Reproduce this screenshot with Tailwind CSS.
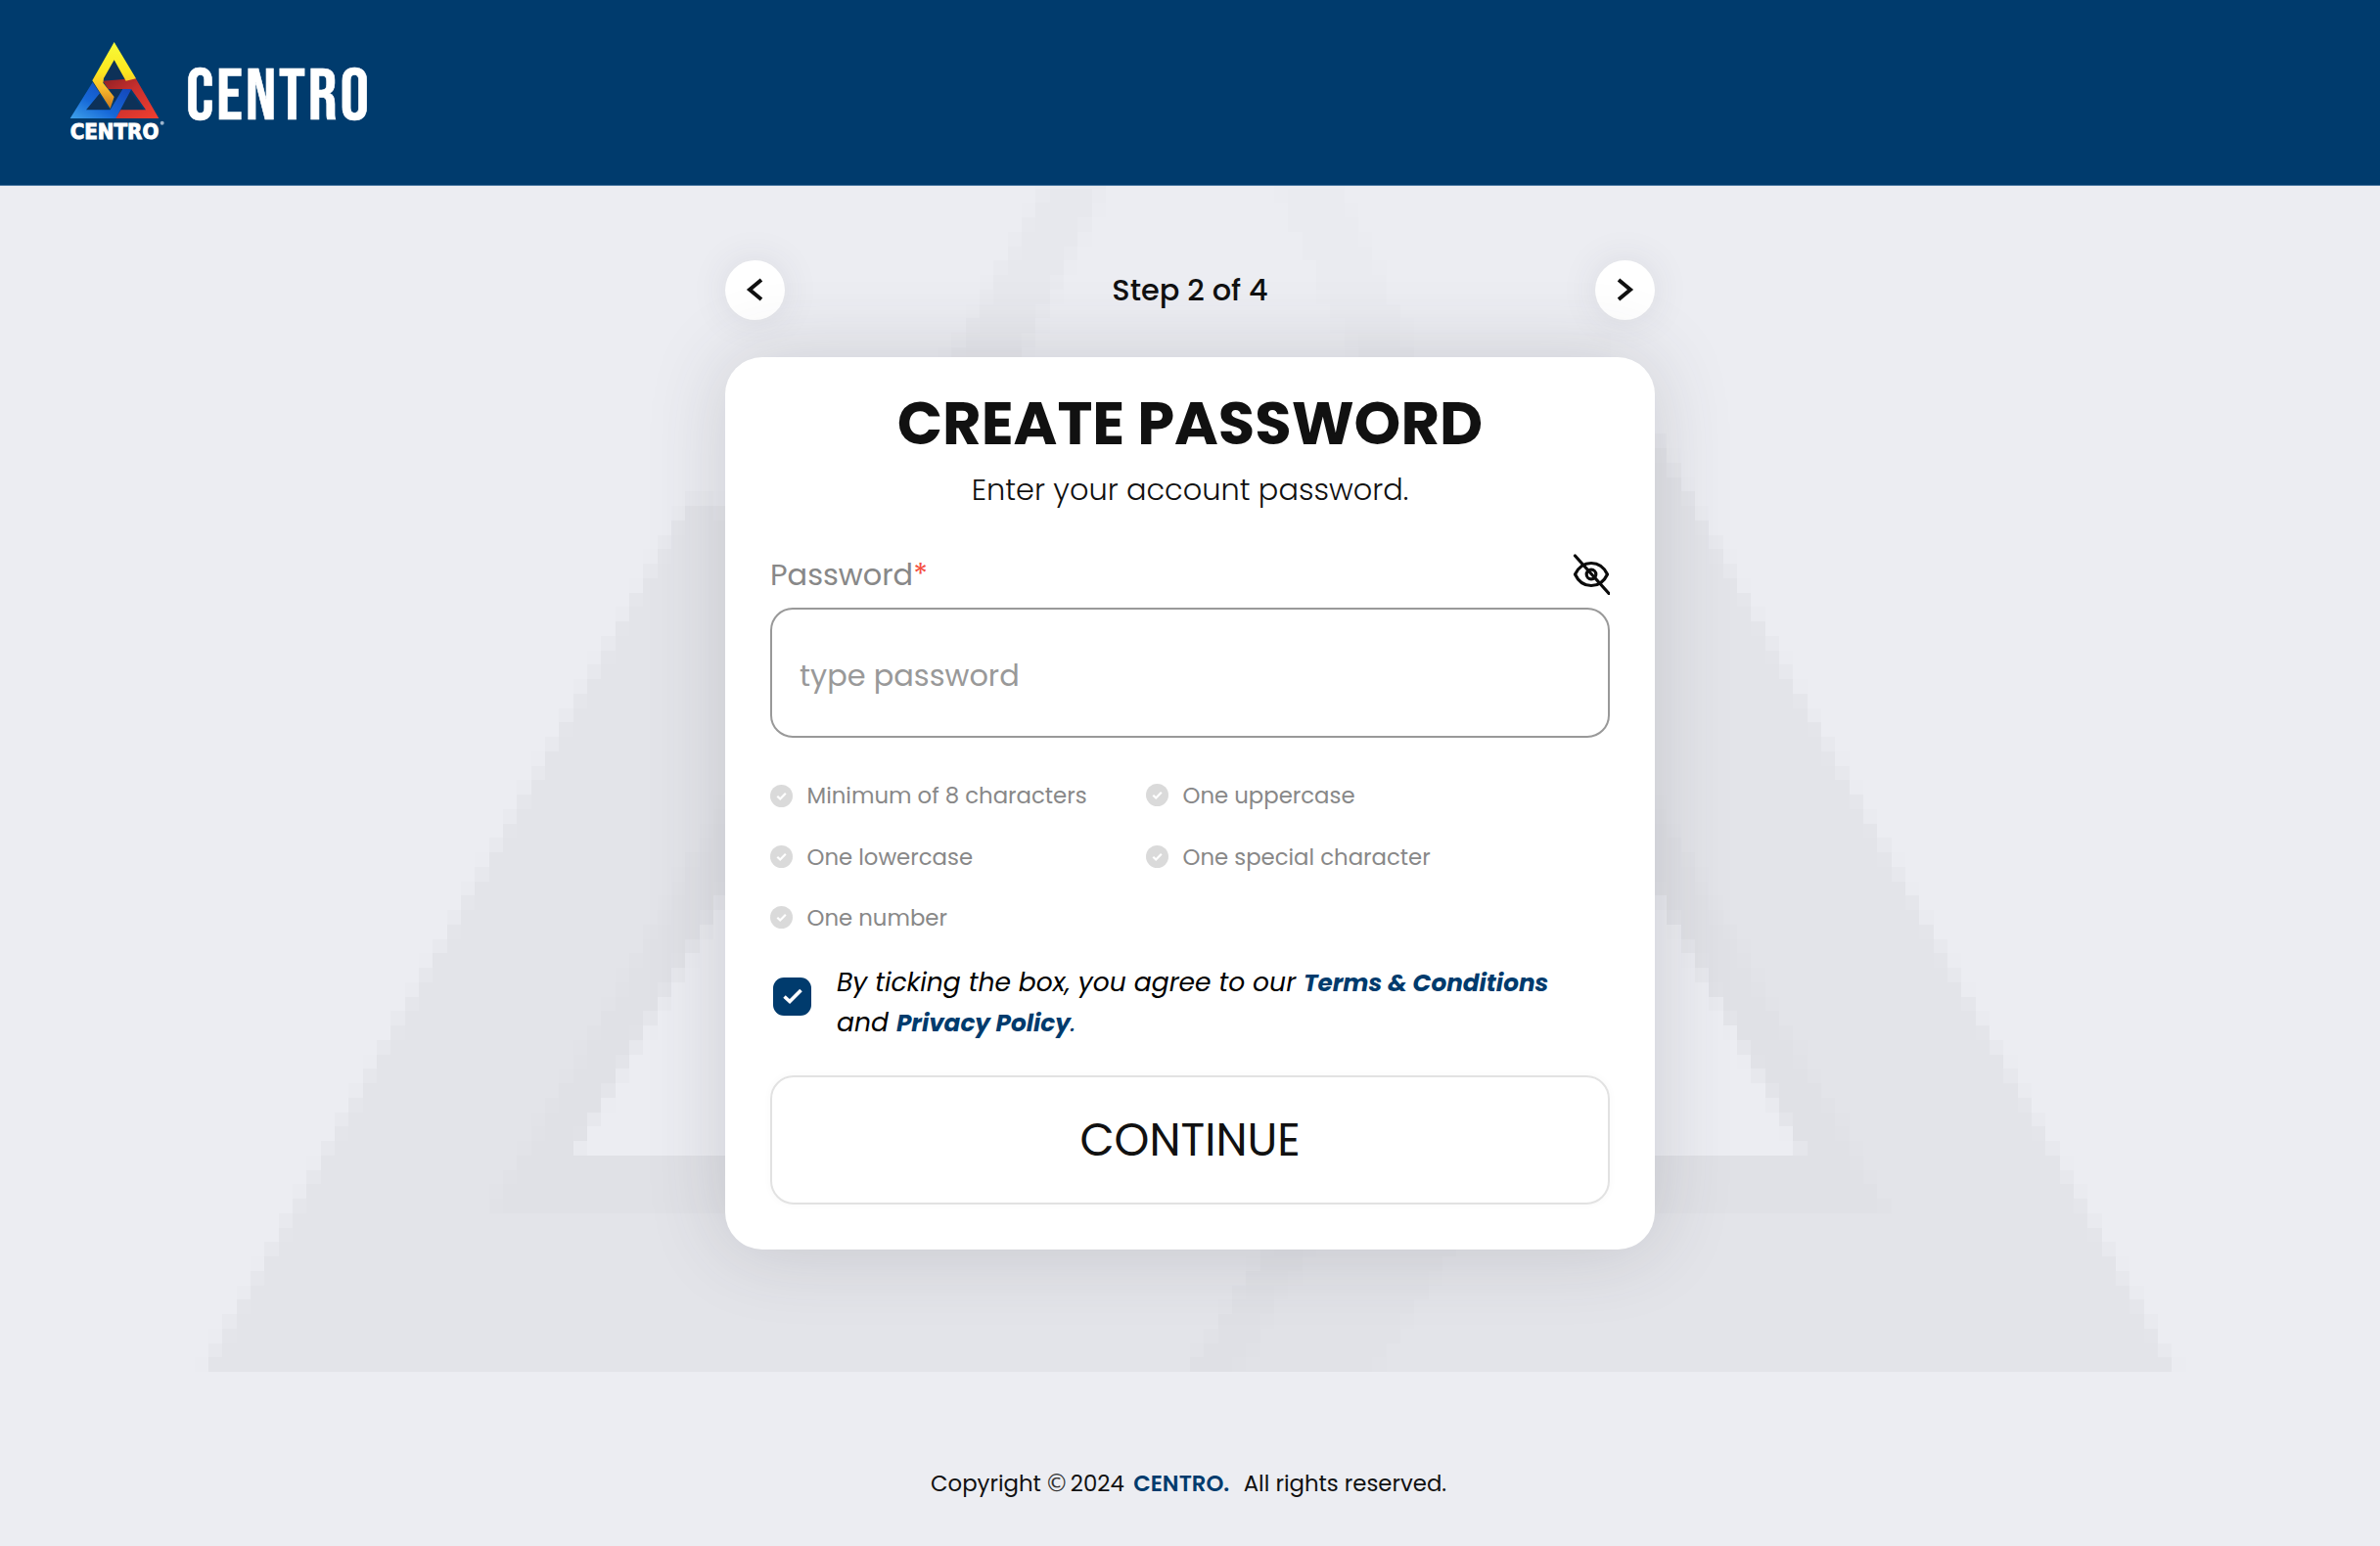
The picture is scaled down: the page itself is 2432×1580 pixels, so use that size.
<!DOCTYPE html>
<html lang="en">
<head>
<meta charset="utf-8">
<title>Centro - Create Password</title>
<script src="https://cdn.jsdelivr.net/npm/@tailwindcss/browser@4"></script>
</head>
<body class="relative flex h-[1580px] w-[2432px] flex-col overflow-hidden bg-[#ecedf2] font-[Poppins,Inter,sans-serif] text-[#111]">

<!-- watermark -->
<svg id="mark" class="absolute inset-0" width="2432" height="1580" viewBox="0 0 2432 1580" shape-rendering="crispEdges"></svg>

<header class="relative flex h-[190px] shrink-0 items-start border-b border-[#4f7ba3] bg-[#003b6d] pl-[70px] pt-[41px]">
  <svg class="overflow-visible" width="100" height="112" viewBox="60 63 300 336">
    <defs>
      <linearGradient id="y" x1="0" y1="0" x2="0" y2="1"><stop offset="0" stop-color="#f6fb3a"/><stop offset=".45" stop-color="#fce61e"/><stop offset=".7" stop-color="#f9b92c"/><stop offset="1" stop-color="#c9771c"/></linearGradient>
      <linearGradient id="r" x1="0" y1="0" x2="1" y2="1"><stop offset="0" stop-color="#8e1f24"/><stop offset=".4" stop-color="#c62f2d"/><stop offset="1" stop-color="#f23f30"/></linearGradient>
      <linearGradient id="b" x1="0" y1="1" x2="1" y2="0"><stop offset="0" stop-color="#3fa2ea"/><stop offset=".4" stop-color="#1668d8"/><stop offset="1" stop-color="#1440b4"/></linearGradient>
    </defs>
    <path fill="#0d3158" d="M200 120 235 185H165ZM150 222 185 277H112ZM185 213h62l-36 60ZM245 215l45 62h-80Z"/>
    <path fill="url(#r)" d="M165 188 266 180 337 303H203L220 277H297L252 213H182Z"/>
    <path fill="url(#b)" d="M134 192 156 226 114 277H188L226 213H253L205 303H65Z"/>
    <path fill="url(#y)" d="M200 69 267 181 236 188 200 124 168 180 166 194 200 237 188 273 133 187Z"/>
    <text x="65" y="365" font-family="DejaVu Sans" font-weight="700" font-size="66" fill="#fff" stroke="#fff" stroke-width="3" textLength="272" lengthAdjust="spacingAndGlyphs">CENTRO</text>
    <circle cx="347" cy="317" r="6" fill="#9db4cc"/>
  </svg>
  <svg class="mt-[6px] ml-[8px] overflow-visible" width="220" height="100" viewBox="178 47 220 100">
    <text x="190" y="121.500" font-family="Bebas Neue, Roboto" font-size="74" fill="#fff" stroke="#fff" stroke-width=".6" textLength="187" lengthAdjust="spacing">CENTRO</text>
  </svg>
</header>

<main class="relative mx-auto mt-[75.500px] flex w-[950px] flex-col">
  <nav class="flex h-[61px] items-center justify-between">
    <button class="flex size-[61px] items-center justify-center rounded-full bg-white shadow-[0_0_38px_rgba(60,60,80,0.1)]">
      <svg width="20" height="26" viewBox="0 0 20 26" fill="none" stroke="#111" stroke-width="4"><path d="M16 3 4 13l12 10"/></svg>
    </button>
    <p class="pt-[2px] text-[30.4px] leading-[46px] font-medium">Step 2 of 4</p>
    <button class="flex size-[61px] items-center justify-center rounded-full bg-white shadow-[0_0_38px_rgba(60,60,80,0.1)]">
      <svg width="20" height="26" viewBox="0 0 20 26" fill="none" stroke="#111" stroke-width="4"><path d="M3 3 15 13 3 23"/></svg>
    </button>
  </nav>

  <section class="mt-[38px] flex h-[912px] flex-col rounded-[38px] bg-white px-[46px] pt-[30.500px] shadow-[0_0_80px_rgba(60,60,70,0.18)]">
    <h1 class="text-center text-[60.8px] leading-[76px] font-bold">CREATE PASSWORD</h1>
    <p class="mt-[7px] text-center text-[30.4px] leading-[46px] font-light">Enter your account password.</p>

    <div class="mt-[42px] flex h-[42px] items-center justify-between">
      <label class="pt-[2px] text-[30.4px] leading-[42px] text-[#888]">Password<span class="text-[#f4503f]">*</span></label>
      <svg width="38" height="42" viewBox="0 0 38 42" fill="none" stroke="#0b0b0b" stroke-width="3.200" stroke-linecap="round"><path d="M2.500 21C6 13.500 12 9.500 19 9.500S32 13.500 35.500 21C32 28.500 26 32.500 19 32.500S6 28.500 2.500 21Z" stroke-linejoin="round"/><circle cx="19" cy="21" r="4.800"/><path d="M2.500 2 37 40.500"/></svg>
    </div>

    <div class="mt-[13px] flex h-[133px] items-center rounded-[23px] border-2 border-[#999] px-[28px] pt-[6px] text-[30.4px] text-[#999]">type password</div>

    <ul class="mt-[42px] grid grid-cols-[384px_1fr] gap-y-[28.7px] text-[22.8px] leading-[34px] text-[#888]">
      <li class="flex items-center gap-[14.500px]"><svg class="size-[23px]" viewBox="0 0 23 23"><circle cx="11.500" cy="11.500" r="11.500" fill="#dadada"/><path d="M7.300 11.800 10.200 14.500 15.800 8.700" fill="none" stroke="#fff" stroke-width="2.200"/></svg>Minimum of 8 characters</li>
      <li class="flex items-center gap-[14.500px]"><svg class="mb-px size-[23px]" viewBox="0 0 23 23"><circle cx="11.500" cy="11.500" r="11.500" fill="#dadada"/><path d="M7.300 11.800 10.200 14.500 15.800 8.700" fill="none" stroke="#fff" stroke-width="2.200"/></svg>One uppercase</li>
      <li class="flex items-center gap-[14.500px]"><svg class="size-[23px]" viewBox="0 0 23 23"><circle cx="11.500" cy="11.500" r="11.500" fill="#dadada"/><path d="M7.300 11.800 10.200 14.500 15.800 8.700" fill="none" stroke="#fff" stroke-width="2.200"/></svg>One lowercase</li>
      <li class="flex items-center gap-[14.500px]"><svg class="mb-px size-[23px]" viewBox="0 0 23 23"><circle cx="11.500" cy="11.500" r="11.500" fill="#dadada"/><path d="M7.300 11.800 10.200 14.500 15.800 8.700" fill="none" stroke="#fff" stroke-width="2.200"/></svg>One special character</li>
      <li class="flex items-center gap-[14.500px]"><svg class="mb-[2px] size-[23px]" viewBox="0 0 23 23"><circle cx="11.500" cy="11.500" r="11.500" fill="#dadada"/><path d="M7.300 11.800 10.200 14.500 15.800 8.700" fill="none" stroke="#fff" stroke-width="2.200"/></svg>One number</li>
    </ul>

    <div class="mt-[28.500px] flex h-[80px] items-start gap-[26px] pl-[3px]">
      <span class="mt-[15px] flex size-[39px] shrink-0 items-center justify-center rounded-[11px] bg-[#003b6d]"><svg width="22" height="18" viewBox="0 0 22 18" fill="none" stroke="#fff" stroke-width="3.600"><path d="M2.500 9.500 8 14.500 19.500 3"/></svg></span>
      <p class="text-[26.6px] leading-[40px] text-black italic">By ticking the box, you agree to our <b class="text-[24.7px] font-bold text-[#003b6d]">Terms &amp; Conditions</b><br>and <b class="text-[24.7px] font-bold text-[#003b6d]">Privacy Policy</b><span class="text-[#003b6d]">.</span></p>
    </div>

    <button class="mt-[35.500px] flex h-[132px] items-center justify-center rounded-[24px] border-2 border-[#e2e2e2] text-[45.6px] shadow-[0_0_8px_rgba(0,0,0,0.03)]">CONTINUE</button>
  </section>
</main>

<footer class="relative mt-[222.500px] flex items-center pl-[951px] text-[22.8px] leading-[34px]">
  <span>Copyright</span><span class="ml-[4px] w-[24px] font-['DejaVu_Sans'] text-[24px] text-[#333]">©</span><span class="ml-[2px]">2024</span><b class="ml-[9.500px] font-semibold text-[#003b6d]">CENTRO.</b><span class="ml-[14.500px]">All rights reserved.</span>
</footer>

<script>
// Low-resolution watermark: each cell is tinted by how much of it a shape covers.
const CW = 14.33, CH = 14.75, X0 = 213 - CW * 14, Y0 = 1402 - CH * 96;
const shapes = [
  { tint: 9.4, pts: [[207,1402],[703,512],[732,512],[760,560],[760,878],[585,1180.75],[1843,1180.75],[1680,888],[1680,424],[2224,1402]] },
  { tint: 2.6, pts: [[500,1240],[760,790],[760,878],[585,1180.75],[1843,1180.75],[1680,888],[1680,800],[1930,1240]] },
  { tint: 2, pts: [[1310,1250],[1500,1250],[1400,1402],[1215,1402]] },
  { tint: 2, pts: [[1310,1250],[1350,1250],[1260,1402],[1215,1402]] },
  { tint: 5, pts: [[1072,185],[1130,185],[1042,370],[968,370]] },
  { tint: 2, pts: [[1300,185],[1370,185],[1450,370],[1385,370]] },
  { tint: 1, pts: [[1385,337],[1640,337],[1640,370],[1385,370]] }
];
function inside(p, x, y) {
  let c = false;
  for (let i = 0, j = p.length - 1; i < p.length; j = i++)
    if ((p[i][1] > y) !== (p[j][1] > y) && x < (p[j][0] - p[i][0]) * (y - p[i][1]) / (p[j][1] - p[i][1]) + p[i][0]) c = !c;
  return c;
}
let out = '';
for (let r = 0; r < 96; r++) for (let q = 0; q < 170; q++) {
  const x = X0 + q * CW, y = Y0 + r * CH;
  let t = 0;
  for (const s of shapes) {
    let n = 0;
    for (let a = 0; a < 3; a++) for (let b = 0; b < 3; b++) n += inside(s.pts, x + (a + .5) * CW / 3, y + (b + .5) * CH / 3);
    t += s.tint * n / 9;
  }
  t = Math.round(t);
  if (t > 0) out += `<rect x="${x}" y="${y}" width="${CW}" height="${CH}" fill="rgb(${236 - t},${237 - t},${242 - t})"/>`;
}
document.getElementById('mark').innerHTML = out;
</script>
</body>
</html>
